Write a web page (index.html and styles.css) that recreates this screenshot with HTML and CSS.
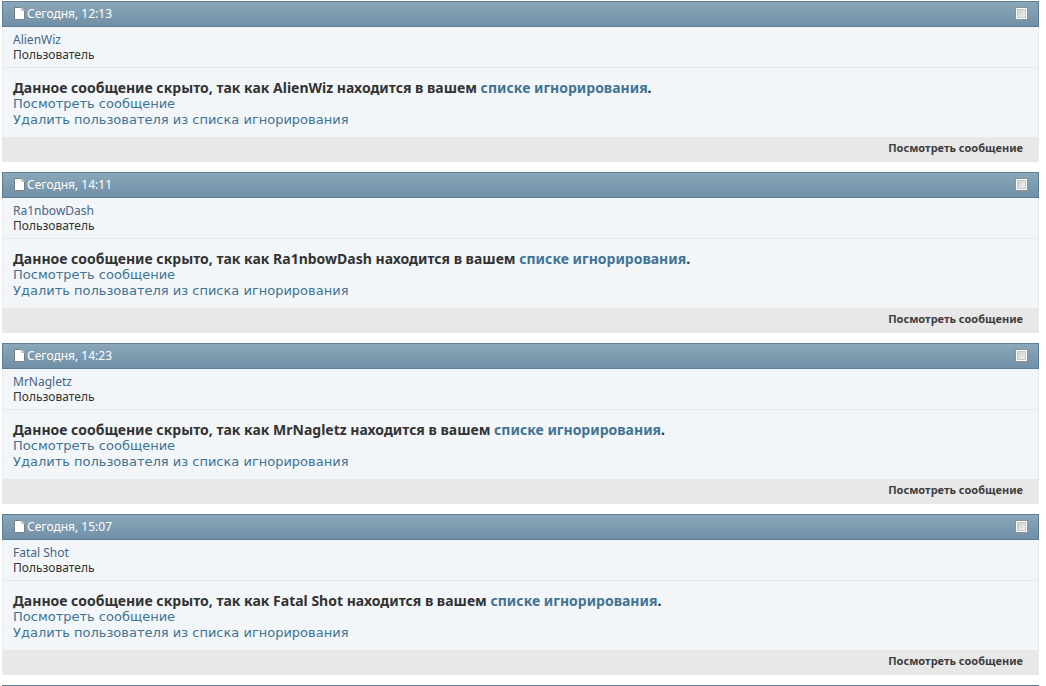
FILE: index.html
```
<!DOCTYPE html>
<html lang="ru">
<head>
<meta charset="utf-8">
<title>Сообщения</title>
<link rel="stylesheet" href="styles.css">
</head>
<body>
<main class="posts">
  <article class="post">
    <header class="post-head">
      <svg class="page-icon" viewBox="0 0 11 13" aria-hidden="true"><path d="M.5.5h7l3 3v9H.5z" fill="#fff" stroke="#7b7f82"/><path d="M7.5.5v3h3" fill="#e4e7e9" stroke="#b9bfc3"/></svg>
      <time class="date">Сегодня, 12:13</time>
      <input class="pick" type="checkbox" aria-label="Выбрать сообщение AlienWiz">
    </header>
    <div class="user"><a class="name" href="#">AlienWiz</a><span class="rank">Пользователь</span></div>
    <div class="body">
      <h2 class="notice">Данное сообщение скрыто, так как AlienWiz находится в вашем <a href="#">списке игнорирования</a>.</h2>
      <a class="action" href="#">Посмотреть сообщение</a>
      <a class="action" href="#">Удалить пользователя из списка игнорирования</a>
    </div>
    <footer class="post-foot"><a class="view" href="#">Посмотреть сообщение</a></footer>
  </article>
  <article class="post">
    <header class="post-head">
      <svg class="page-icon" viewBox="0 0 11 13" aria-hidden="true"><path d="M.5.5h7l3 3v9H.5z" fill="#fff" stroke="#7b7f82"/><path d="M7.5.5v3h3" fill="#e4e7e9" stroke="#b9bfc3"/></svg>
      <time class="date">Сегодня, 14:11</time>
      <input class="pick" type="checkbox" aria-label="Выбрать сообщение Ra1nbowDash">
    </header>
    <div class="user"><a class="name" href="#">Ra1nbowDash</a><span class="rank">Пользователь</span></div>
    <div class="body">
      <h2 class="notice">Данное сообщение скрыто, так как Ra1nbowDash находится в вашем <a href="#">списке игнорирования</a>.</h2>
      <a class="action" href="#">Посмотреть сообщение</a>
      <a class="action" href="#">Удалить пользователя из списка игнорирования</a>
    </div>
    <footer class="post-foot"><a class="view" href="#">Посмотреть сообщение</a></footer>
  </article>
  <article class="post">
    <header class="post-head">
      <svg class="page-icon" viewBox="0 0 11 13" aria-hidden="true"><path d="M.5.5h7l3 3v9H.5z" fill="#fff" stroke="#7b7f82"/><path d="M7.5.5v3h3" fill="#e4e7e9" stroke="#b9bfc3"/></svg>
      <time class="date">Сегодня, 14:23</time>
      <input class="pick" type="checkbox" aria-label="Выбрать сообщение MrNagletz">
    </header>
    <div class="user"><a class="name" href="#">MrNagletz</a><span class="rank">Пользователь</span></div>
    <div class="body">
      <h2 class="notice">Данное сообщение скрыто, так как MrNagletz находится в вашем <a href="#">списке игнорирования</a>.</h2>
      <a class="action" href="#">Посмотреть сообщение</a>
      <a class="action" href="#">Удалить пользователя из списка игнорирования</a>
    </div>
    <footer class="post-foot"><a class="view" href="#">Посмотреть сообщение</a></footer>
  </article>
  <article class="post">
    <header class="post-head">
      <svg class="page-icon" viewBox="0 0 11 13" aria-hidden="true"><path d="M.5.5h7l3 3v9H.5z" fill="#fff" stroke="#7b7f82"/><path d="M7.5.5v3h3" fill="#e4e7e9" stroke="#b9bfc3"/></svg>
      <time class="date">Сегодня, 15:07</time>
      <input class="pick" type="checkbox" aria-label="Выбрать сообщение Fatal Shot">
    </header>
    <div class="user"><a class="name" href="#">Fatal Shot</a><span class="rank">Пользователь</span></div>
    <div class="body">
      <h2 class="notice">Данное сообщение скрыто, так как Fatal Shot находится в вашем <a href="#">списке игнорирования</a>.</h2>
      <a class="action" href="#">Посмотреть сообщение</a>
      <a class="action" href="#">Удалить пользователя из списка игнорирования</a>
    </div>
    <footer class="post-foot"><a class="view" href="#">Посмотреть сообщение</a></footer>
  </article>
  <hr class="end">
</main>
</body>
</html>
```
FILE: styles.css
```
* { box-sizing: border-box; }
body {
  margin: 0;
  background: #fff;
  color: #333;
  font: 12px/15px Tahoma, "Noto Sans", sans-serif;
}
a { color: #417394; text-decoration: none; }
a:hover { text-decoration: underline; }
.posts {
  display: flex;
  flex-direction: column;
  gap: 10px;
  padding: 1px 7px 0 2px;
}
.post-head {
  display: flex;
  align-items: center;
  gap: 2px;
  height: 26px;
  padding: 0 10px 1px 11px;
  border: 1px solid #5a7f97;
  background: linear-gradient(#8ba7b9, #7090a7);
  color: #fff;
}
.page-icon { width: 11px; height: 13px; }
.pick {
  appearance: none;
  width: 13px;
  height: 13px;
  margin: 0 0 0 auto;
  border: 1px solid #8e8f8f;
  background: linear-gradient(135deg, #c4c8cc, #f8f8f8);
  box-shadow: inset 0 0 0 1px #fff, inset 0 0 0 2px #c5c8cb;
}
.pick:checked { background: #35617f; }
.user, .body {
  display: flex;
  flex-direction: column;
  align-items: flex-start;
  padding: 5px 10px;
  border: solid #e6eaec;
  border-width: 0 1px;
  background: #f2f6f8;
}
.user { border-bottom-width: 1px; }
.name { color: #466487; }
.body {
  padding: 11px 10px 9px;
  font: 13px/16px Verdana, "DejaVu Sans", sans-serif;
}
.notice {
  margin: 0;
  font: bold 14px/17px Tahoma, "Noto Sans", sans-serif;
}
.post-foot {
  display: flex;
  justify-content: flex-end;
  padding: 3px 16px 7px;
  background: #e8e8e8;
}
.view {
  color: #3e3e3e;
  font-size: 11px;
  font-weight: bold;
}
.end {
  width: 100%;
  margin: 0;
  border: 0;
  border-top: 1px solid #5a7f97;
}
```
